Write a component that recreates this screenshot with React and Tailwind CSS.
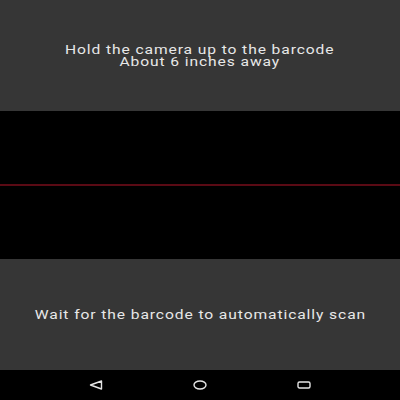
import React from "react";

const NavBar = () => (
  <div className="h-[30px] bg-black flex items-center justify-center gap-[90px]">
    <svg width="14" height="10" viewBox="0 0 14 10" fill="none" stroke="#e5e5e5" strokeWidth="1.4" strokeLinejoin="round">
      <path d="M1.5 5 L12.5 1 L12.5 9 Z" />
    </svg>
    <svg width="14" height="10" viewBox="0 0 14 10" fill="none" stroke="#e5e5e5" strokeWidth="1.4">
      <ellipse cx="7" cy="5" rx="6" ry="4" />
    </svg>
    <svg width="14" height="10" viewBox="0 0 14 10" fill="none" stroke="#e5e5e5" strokeWidth="1.4">
      <rect x="1" y="2" width="12" height="6" rx="1.5" />
    </svg>
  </div>
);

export default function App() {
  return (
    <div className="w-[400px] h-[400px] flex flex-col bg-black overflow-hidden" style={{ fontFamily: "Roboto, 'Noto Sans', sans-serif" }}>
      <div className="h-[111px] bg-[#363636] flex flex-col items-center justify-center text-[#e8e8e8] text-[12px] leading-[12px] tracking-[0.7px] pt-[1px]">
        <div className="scale-x-[1.3] whitespace-nowrap">Hold the camera up to the barcode</div>
        <div className="scale-x-[1.3] whitespace-nowrap">About 6 inches away</div>
      </div>
      <div className="h-[148px] bg-black flex flex-col justify-center">
        <div className="h-[2px] bg-[#5a0a14]" />
      </div>
      <div className="h-[111px] bg-[#363636] flex items-center justify-center text-[#e8e8e8] text-[12px] leading-[12px] tracking-[0.7px]">
        <div className="scale-x-[1.3] whitespace-nowrap">Wait for the barcode to automatically scan</div>
      </div>
      <NavBar />
    </div>
  );
}
